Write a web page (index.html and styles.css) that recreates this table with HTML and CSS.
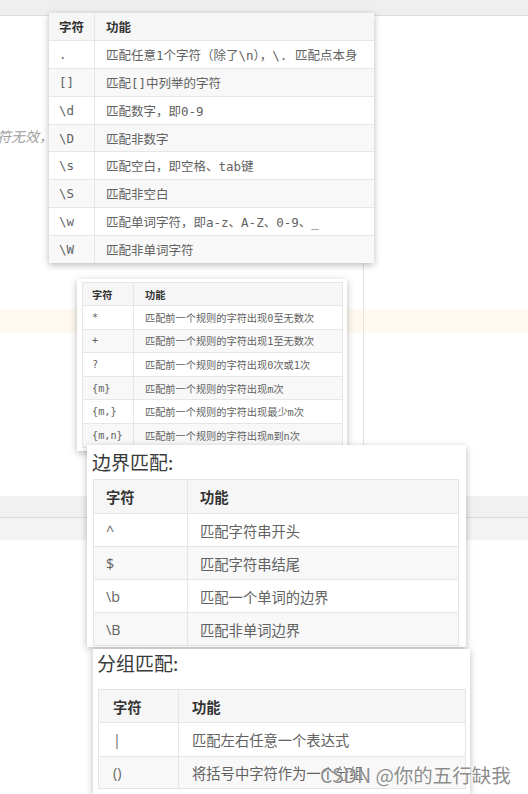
FILE: index.html
```html
<!DOCTYPE html>
<html lang="zh">
<head>
<meta charset="utf-8">
<title>正则表达式 字符匹配</title>
<link rel="stylesheet" href="styles.css">
</head>
<body>
<div class="page">
  <div class="topbar"></div>
  <div class="region">
    <p class="note">符无效，</p>
    <div class="warn-band"></div>
  </div>
  <div class="gap"></div>
  <div class="grey-band"></div>
  <div class="grey-band2"></div>

  <section class="card card1">
    <table class="tbl mono">
      <tr class="head"><th class="c1">字符</th><th>功能</th></tr>
      <tr><td class="c1">.</td><td>匹配任意1个字符（除了\n），\. 匹配点本身</td></tr>
      <tr class="alt"><td class="c1">[]</td><td>匹配[]中列举的字符</td></tr>
      <tr><td class="c1">\d</td><td>匹配数字，即0-9</td></tr>
      <tr class="alt"><td class="c1">\D</td><td>匹配非数字</td></tr>
      <tr><td class="c1">\s</td><td>匹配空白，即空格、tab键</td></tr>
      <tr class="alt"><td class="c1">\S</td><td>匹配非空白</td></tr>
      <tr><td class="c1">\w</td><td>匹配单词字符，即a-z、A-Z、0-9、_</td></tr>
      <tr class="alt"><td class="c1">\W</td><td>匹配非单词字符</td></tr>
    </table>
  </section>

  <section class="card card2">
    <table class="tbl mono">
      <tr class="head"><th class="c1">字符</th><th>功能</th></tr>
      <tr><td class="c1">*</td><td>匹配前一个规则的字符出现0至无数次</td></tr>
      <tr class="alt"><td class="c1">+</td><td>匹配前一个规则的字符出现1至无数次</td></tr>
      <tr><td class="c1">?</td><td>匹配前一个规则的字符出现0次或1次</td></tr>
      <tr class="alt"><td class="c1">{m}</td><td>匹配前一个规则的字符出现m次</td></tr>
      <tr><td class="c1">{m,}</td><td>匹配前一个规则的字符出现最少m次</td></tr>
      <tr class="alt"><td class="c1">{m,n}</td><td>匹配前一个规则的字符出现m到n次</td></tr>
    </table>
  </section>

  <section class="card card3">
    <h2 class="title">边界匹配:</h2>
    <table class="tbl sans framed">
      <tr class="head"><th class="c1">字符</th><th>功能</th></tr>
      <tr><td class="c1">^</td><td>匹配字符串开头</td></tr>
      <tr class="alt"><td class="c1">$</td><td>匹配字符串结尾</td></tr>
      <tr><td class="c1">\b</td><td>匹配一个单词的边界</td></tr>
      <tr class="alt"><td class="c1">\B</td><td>匹配非单词边界</td></tr>
    </table>
  </section>

  <section class="card card4">
    <h2 class="title">分组匹配:</h2>
    <table class="tbl sans framed">
      <tr class="head"><th class="c1">字符</th><th>功能</th></tr>
      <tr class="r1"><td class="c1">|</td><td>匹配左右任意一个表达式</td></tr>
      <tr class="alt r2"><td class="c1">()</td><td>将括号中字符作为一个分组</td></tr>
    </table>
  </section>

  <div class="watermark">CSDN @你的五行缺我</div>
</div>
</body>
</html>
```

FILE: styles.css
```css
html, body {
  margin: 0;
  padding: 0;
  background: #ffffff;
}

.page {
  position: relative;
  width: 528px;
  height: 794px;
  overflow: hidden;
  font-family: "Noto Sans CJK SC", sans-serif;
}

/* background page */
.topbar {
  height: 15px;
  background: #efefef;
  border-bottom: 1px solid #dcdcdc;
}

.region {
  height: 429px;
  padding-top: 110px;
  box-sizing: border-box;
  background: linear-gradient(to right, transparent 363px, #e2e2e2 363px, #e2e2e2 364px, transparent 364px);
}

.note {
  margin: 0 0 0 -3px;
  height: 20px;
  font-family: "Noto Sans CJK SC", sans-serif;
  font-style: italic;
  font-size: 14px;
  line-height: 20px;
  color: #a0a0a0;
}

.warn-band {
  margin-top: 163px;
  height: 24px;
  background: rgba(250, 236, 196, 0.28);
}

.gap {
  height: 51px;
}

.grey-band {
  height: 21px;
  background: #f1f1f1;
  border-bottom: 1px solid #dadada;
}

.grey-band2 {
  height: 22px;
  background: #f3f3f3;
}

/* screenshot cards */
.card {
  position: absolute;
  background: #ffffff;
  box-shadow: 0 2px 7px rgba(0, 0, 0, 0.28);
  box-sizing: border-box;
}

.card1 {
  left: 49px;
  top: 13px;
  width: 325px;
  height: 250px;
}

.card2 {
  left: 77px;
  top: 279px;
  width: 270px;
  height: 172px;
  padding: 3px 4px 0 5px;
}

.card3 {
  left: 87px;
  top: 445px;
  width: 379px;
  height: 202px;
  padding: 0 7px 0 6px;
}

.card4 {
  left: 93px;
  top: 649px;
  width: 377px;
  height: 145px;
  padding: 0 4px 0 5px;
}

.title {
  margin: 0 0 0 -1px;
  height: 34px;
  font-size: 19px;
  line-height: 34px;
  font-weight: normal;
  color: #3a3a3a;
}

.card4 .title {
  height: 40px;
  line-height: 28px;
}

/* tables */
.tbl {
  width: 100%;
  border-collapse: collapse;
  color: #626262;
}

.tbl th {
  text-align: left;
  font-weight: bold;
  color: #333333;
}

.tbl th,
.tbl td {
  padding: 0 0 0 11px;
  border: 1px solid #e6e6e6;
  white-space: nowrap;
}

.tbl tr:first-child th {
  border-top: none;
}

.tbl tr th:first-child,
.tbl tr td:first-child {
  border-left: none;
}

.tbl tr th:last-child,
.tbl tr td:last-child {
  border-right: none;
}

.tbl tr:last-child td {
  border-bottom: none;
}

.tbl .head {
  background: #f6f6f6;
}

.tbl .alt {
  background: #f8f8f8;
}

.mono {
  font-family: "DejaVu Sans Mono", "Noto Sans CJK SC", monospace;
}

.card1 .tbl {
  font-size: 12.5px;
}

.card1 .tbl tr {
  height: 27.8px;
}

.card1 .tbl .c1 {
  width: 35px;
  padding-left: 10px;
}

.card1 .tbl th {
  font-family: "Noto Sans CJK SC", sans-serif;
}

.card2 .tbl {
  font-size: 10.2px;
  border: 1px solid #e6e6e6;
}

.card2 .tbl tr {
  height: 23.6px;
}

.card2 .tbl .head {
  height: 23px;
}

.card2 .tbl .c1 {
  width: 41px;
  padding-left: 9px;
}

.card2 .tbl th {
  font-family: "Noto Sans CJK SC", sans-serif;
}

.sans {
  font-family: "Open Sans", "Noto Sans CJK SC", sans-serif;
  font-size: 14.3px;
}

.framed {
  border: 1px solid #e4e4e4;
}

.card3 .tbl tr {
  height: 33px;
}

.card3 .tbl .head {
  height: 34px;
}

.card3 .tbl th,
.card3 .tbl td {
  padding-left: 12px;
}

.card3 .tbl .c1 {
  width: 81px;
}

.card4 .tbl .head {
  height: 33px;
}

.card4 .tbl .r1 {
  height: 34px;
}

.card4 .tbl .r2 {
  height: 32px;
}

.card4 .tbl th,
.card4 .tbl td {
  padding-left: 13px;
}

.card4 .tbl .c1 {
  width: 65px;
  padding-left: 14px;
}

.watermark {
  position: absolute;
  left: 320px;
  top: 761px;
  font-family: "Noto Sans CJK SC", sans-serif;
  font-size: 19.5px;
  line-height: 28px;
  color: rgba(120, 120, 120, 0.85);
  text-shadow: 0 0 2px rgba(255, 255, 255, 0.9);
  white-space: nowrap;
}
```
